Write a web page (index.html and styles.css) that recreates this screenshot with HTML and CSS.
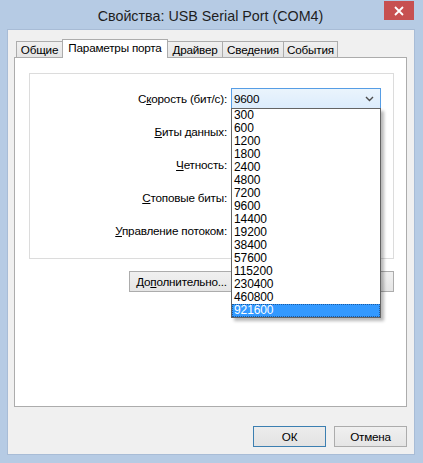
FILE: index.html
```html
<!DOCTYPE html>
<html lang="ru">
<head>
<meta charset="utf-8">
<title>Свойства: USB Serial Port (COM4)</title>
<link rel="stylesheet" href="styles.css">
</head>
<body>
<div class="window">
  <div class="titlebar">
    <div class="title">Свойства: USB Serial Port (COM4)</div>
    <div class="close">
      <svg width="10" height="10" viewBox="0 0 10 10"><path d="M1 1L9 9M9 1L1 9" stroke="#fff" stroke-width="1.8" fill="none"/></svg>
    </div>
  </div>
  <div class="client">
    <div class="tabs">
      <div class="tab w1">Общие</div>
      <div class="tab w2 active">Параметры порта</div>
      <div class="tab w3">Драйвер</div>
      <div class="tab w4">Сведения</div>
      <div class="tab w5">События</div>
    </div>
    <div class="panel">
      <div class="group">
        <div class="label">С<u>к</u>орость (бит/с):</div>
        <div class="combo-wrap">
          <div class="combo open">
            <span>9600</span>
            <svg class="chev" width="9" height="6" viewBox="0 0 9 6"><path d="M1 1L4.5 4.5L8 1" stroke="#4d4d4d" stroke-width="1.4" fill="none"/></svg>
          </div>
          <div class="list">
            <div class="item">300</div>
            <div class="item">600</div>
            <div class="item">1200</div>
            <div class="item">1800</div>
            <div class="item">2400</div>
            <div class="item">4800</div>
            <div class="item">7200</div>
            <div class="item">9600</div>
            <div class="item">14400</div>
            <div class="item">19200</div>
            <div class="item">38400</div>
            <div class="item">57600</div>
            <div class="item">115200</div>
            <div class="item">230400</div>
            <div class="item">460800</div>
            <div class="item sel">921600</div>
          </div>
        </div>
        <div class="label"><u>Б</u>иты данных:</div>
        <div class="combo"></div>
        <div class="label"><u>Ч</u>етность:</div>
        <div class="combo"></div>
        <div class="label"><u>С</u>топовые биты:</div>
        <div class="combo"></div>
        <div class="label"><u>У</u>правление потоком:</div>
        <div class="combo"></div>
      </div>
      <div class="btnrow">
        <div class="btn b-adv">До<u>п</u>олнительно...</div>
        <div class="btn b-def"></div>
      </div>
    </div>
    <div class="footer">
      <div class="btn b-dlg default">ОК</div>
      <div class="btn b-dlg">Отмена</div>
    </div>
  </div>
</div>
</body>
</html>
```
FILE: styles.css
```css
html, body {
  margin: 0;
  padding: 0;
  background: #b6cbe4;
}
body {
  font-family: "Liberation Sans", Arial, sans-serif;
  font-size: 11.7px;
  letter-spacing: -0.2px;
  color: #000;
}
.window {
  width: 423px;
  height: 463px;
  background: #b6cbe4;
  display: flex;
  flex-direction: column;
  position: relative;
  box-sizing: border-box;
}
.titlebar {
  height: 30px;
  flex: none;
  display: flex;
  align-items: center;
  justify-content: center;
  position: relative;
}
.title {
  font-size: 14.3px;
  letter-spacing: 0;
  color: #1e1e1e;
  margin-top: 1px;
  margin-left: -2px;
}
.close {
  position: absolute;
  top: 1px;
  right: 9px;
  width: 30px;
  height: 19px;
  background: #c75050;
  display: flex;
  align-items: center;
  justify-content: center;
}
.client {
  flex: 1;
  margin: 0 9px 9px 8px;
  background: #f0f0f0;
  padding: 9px 7px 7px 6px;
  display: flex;
  flex-direction: column;
  box-shadow: 0 0 0 1px #a8bcd6;
}
.tabs {
  height: 18px;
  display: flex;
  align-items: flex-end;
  padding-left: 2px;
  position: relative;
  z-index: 1;
}
.tab {
  box-sizing: border-box;
  height: 16px;
  border: 1px solid #acacac;
  border-bottom: none;
  margin-right: -1px;
  background: linear-gradient(#f0f0f0, #e5e5e5);
  text-align: center;
  line-height: 15px;
  white-space: nowrap;
}
.tab.active {
  height: 19px;
  margin-bottom: -1px;
  background: #fff;
  line-height: 16px;
  position: relative;
}
.w1 { width: 47px; }
.w2 { width: 106px; }
.w3 { width: 56px; }
.w4 { width: 62px; }
.w5 { width: 55px; }
.panel {
  box-sizing: border-box;
  height: 350px;
  border: 1px solid #acacac;
  background: #fff;
  padding: 15px 0 0 14px;
}
.group {
  box-sizing: border-box;
  width: 365px;
  height: 186px;
  border: 1px solid #dcdcdc;
  padding: 14px 12px 0 0;
  display: grid;
  grid-template-columns: 1fr 150px;
  grid-auto-rows: 21px;
  column-gap: 4px;
  row-gap: 12px;
}
.label {
  text-align: right;
  line-height: 21px;
  white-space: nowrap;
}
.combo-wrap {
  position: relative;
  z-index: 2;
}
.combo {
  box-sizing: border-box;
  height: 21px;
  border: 1px solid #acacac;
  background: linear-gradient(#f0f0f0, #e5e5e5);
}
.combo.open {
  border-color: #569de5;
  background: linear-gradient(#eaf4fc, #dcecfc);
  display: flex;
  align-items: center;
  justify-content: space-between;
  padding: 0 6px 0 2px;
}
.combo.open span {
  line-height: 19px;
}
.chev {
  display: block;
}
.list {
  position: absolute;
  left: 0;
  top: 20px;
  width: 150px;
  box-sizing: border-box;
  border: 1px solid #646464;
  background: #fff;
  box-shadow: 3px 3px 3px rgba(0, 0, 0, 0.28);
  padding: 0;
}
.item {
  height: 13px;
  line-height: 13px;
  padding-left: 2px;
  font-size: 12px;
  letter-spacing: -0.1px;
}
.item.sel {
  background: #3399ff;
  color: #fff;
  outline: 1px dotted #1c5aa0;
  outline-offset: -1px;
}
.btnrow {
  width: 365px;
  margin-top: 12px;
  display: flex;
  justify-content: flex-end;
  gap: 8px;
}
.btn {
  box-sizing: border-box;
  height: 21px;
  border: 1px solid #acacac;
  background: linear-gradient(#f0f0f0, #e5e5e5);
  display: flex;
  align-items: center;
  justify-content: center;
  white-space: nowrap;
  overflow: hidden;
}
.b-adv { width: 105px; }
.b-def { width: 152px; }
.footer {
  margin-top: 19px;
  display: flex;
  justify-content: flex-end;
  gap: 8px;
}
.b-dlg {
  width: 73px;
}
.btn.default {
  border-color: #3c7fb1;
  background: linear-gradient(#ececec, #e3e3e3);
}
```
